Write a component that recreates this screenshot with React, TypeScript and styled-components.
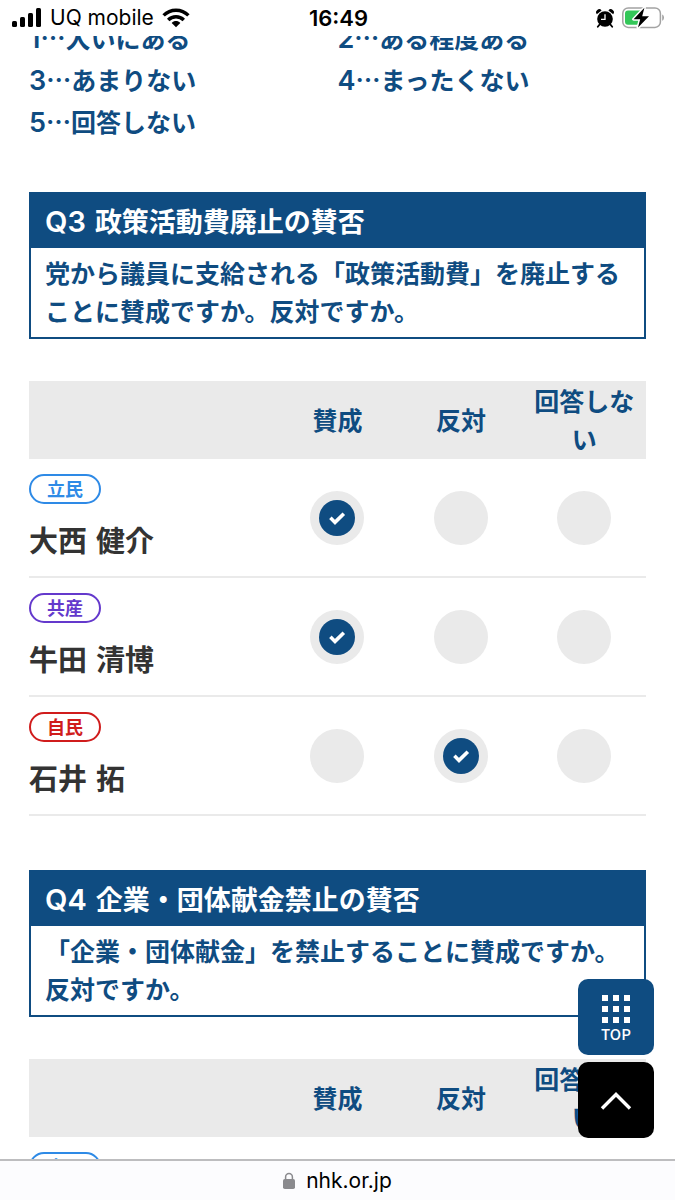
import React from "react";
import styled, { createGlobalStyle } from "styled-components";

const NAVY = "#0f4c81";
const GREY = "#eaeaea";
const JP = `"Noto Sans CJK JP", sans-serif`;
const LATIN = `Inter, "Noto Sans CJK JP", sans-serif`;

const GlobalStyle = createGlobalStyle`
  * { box-sizing: border-box; }
  body {
    margin: 0;
    background: #fff;
    color: #333;
    font-family: ${JP};
  }
`;

const Screen = styled.div`
  display: grid;
  grid-template-rows: auto minmax(0, 1fr) auto;
  height: 100vh;
`;

const StatusBar = styled.header`
  display: grid;
  grid-template-columns: 1fr auto 1fr;
  align-items: center;
  height: 36px;
  padding: 0 10px 0 12px;
  color: #000;
  font: 400 21px/36px ${LATIN};
`;

const StatusGroup = styled.div<{ $end?: boolean }>`
  display: flex;
  align-items: center;
  justify-content: ${(p) => (p.$end ? "flex-end" : "flex-start")};
  gap: 8px;
`;

const Clock = styled.time`
  font-weight: 600;
  font-size: 22px;
`;

const Viewport = styled.div`
  position: relative;
  min-height: 0;
`;

const Scroller = styled.main`
  height: 100%;
  overflow-y: auto;
  scrollbar-width: none;
  padding: 0 29px;
`;

const Options = styled.ol`
  display: grid;
  grid-template-columns: 1fr 1fr;
  row-gap: 4px;
  margin: -18px 0 52px;
  padding: 0;
  list-style: none;
  color: ${NAVY};
  font-size: 25px;
  font-weight: 700;
  line-height: 38px;
`;

const Digit = styled.span`
  font-family: ${LATIN};
  font-size: 27px;
  font-weight: 600;
  line-height: 1;
`;

const Section = styled.section`
  margin-bottom: 54px;
`;

const QuestionBox = styled.div`
  margin-bottom: 42px;
  border: 2px solid ${NAVY};
  color: ${NAVY};
`;

const QuestionTitle = styled.h2`
  display: flex;
  align-items: baseline;
  gap: 9px;
  height: 54px;
  margin: 0;
  padding: 0 14px;
  background: ${NAVY};
  color: #fff;
  font-size: 27px;
  font-weight: 700;
  line-height: 54px;
`;

const QuestionNumber = styled.span`
  font-family: ${LATIN};
  font-size: 29px;
  font-weight: 600;
`;

const QuestionText = styled.p`
  margin: 0;
  padding: 5px 14px 8px;
  font-size: 25px;
  font-weight: 700;
  line-height: 38px;
`;

const Table = styled.table`
  width: 100%;
  table-layout: fixed;
  border-collapse: separate;
  border-spacing: 0;
`;

const HeadCell = styled.th<{ $wide?: boolean }>`
  width: ${(p) => (p.$wide ? 40 : 20)}%;
  padding: 0 0 2px;
  background: ${GREY};
  color: ${NAVY};
  font-size: 25px;
  font-weight: 700;
  line-height: 38px;
`;

const NameCell = styled.th`
  padding: 15px 0 18px;
  border-bottom: 2px solid ${GREY};
  text-align: left;
`;

const Party = styled.span<{ $color: string }>`
  display: block;
  width: 72px;
  height: 30px;
  margin-bottom: 16px;
  border: 2px solid ${(p) => p.$color};
  border-radius: 15px;
  color: ${(p) => p.$color};
  font-size: 18px;
  font-weight: 700;
  line-height: 25px;
  text-align: center;
`;

const Name = styled.span`
  display: flex;
  gap: 9px;
  font-size: 29px;
  font-weight: 700;
  line-height: 38px;
`;

const AnswerCell = styled.td`
  padding: 0;
  border-bottom: 2px solid ${GREY};
`;

const Dot = styled.span`
  display: flex;
  align-items: center;
  justify-content: center;
  width: 54px;
  height: 54px;
  margin: 0 auto;
  border-radius: 50%;
  background: ${GREY};
`;

const Floating = styled.nav`
  position: absolute;
  right: 21px;
  bottom: 21px;
  display: grid;
  gap: 7px;
`;

const FloatButton = styled.button<{ $color: string }>`
  display: flex;
  flex-direction: column;
  align-items: center;
  justify-content: center;
  gap: 3px;
  width: 76px;
  height: 76px;
  padding: 2px 0 0;
  border: 0;
  border-radius: 10px;
  background: ${(p) => p.$color};
  color: #fff;
  font: 500 15px/16px ${JP};
`;

const AddressBar = styled.footer`
  display: flex;
  align-items: center;
  justify-content: center;
  gap: 11px;
  height: 41px;
  border-top: 2px solid #bdbdbf;
  background: #fcfcfe;
  color: #000;
  font: 400 21px/38px ${LATIN};
`;

const SignalIcon = () => (
  <svg width="30" height="20" viewBox="0 0 30 20" aria-hidden="true">
    <rect x="0" y="13" width="5" height="6" rx="1.5" />
    <rect x="8" y="9" width="5" height="10" rx="1.5" />
    <rect x="16" y="5" width="5" height="14" rx="1.5" />
    <rect x="24" y="0" width="5" height="19" rx="1.5" />
  </svg>
);

const WifiIcon = () => (
  <svg width="28" height="20" viewBox="0 0 28 20" aria-hidden="true">
    <g fill="none" stroke="#000" strokeWidth="3.4">
      <path d="M1.6 7.4C8.4 .5 19.6 .5 26.4 7.4" />
      <path d="M6.2 12C10.5 7.7 17.5 7.7 21.8 12" />
    </g>
    <path d="M9.7 14.9C12.1 12.5 15.9 12.5 18.3 14.9L14 19.2Z" />
  </svg>
);

const AlarmIcon = () => (
  <svg width="18" height="19" viewBox="0 0 18 19" aria-hidden="true">
    <circle cx="9" cy="10" r="7.8" />
    <path d="M.8 5.2A3 3 0 0 1 5.6 1.4ZM17.2 5.2A3 3 0 0 0 12.4 1.4Z" />
    <path d="M3.6 15.5 1.8 17.8M14.4 15.5l1.8 2.3" stroke="#000" strokeWidth="1.8" strokeLinecap="round" />
    <path d="M9 5.2V10.4H5" fill="none" stroke="#fff" strokeWidth="1.3" />
  </svg>
);

const BatteryIcon = () => (
  <svg width="43" height="22" viewBox="0 0 43 22" aria-hidden="true">
    <rect x=".8" y="1" width="37.6" height="19.4" rx="5.4" fill="#fff" stroke="#a3a3a3" strokeWidth="1.5" />
    <path d="M40.2 7.6c2.4 1 2.4 5.2 0 6.2Z" fill="#a3a3a3" />
    <path d="M6 3.6H18V17.8H6A3 3 0 0 1 3 14.8V6.6A3 3 0 0 1 6 3.6Z" fill="#34c759" />
    <path d="M22.4 .8 11.6 12.2H18.2L16 20.6 27 9.2H20.2Z" stroke="#fff" strokeWidth="3" strokeLinejoin="round" />
    <path d="M22.4 .8 11.6 12.2H18.2L16 20.6 27 9.2H20.2Z" />
  </svg>
);

const CheckedIcon = () => (
  <svg width="36" height="36" viewBox="0 0 36 36" aria-hidden="true">
    <circle cx="18" cy="18" r="18" fill={NAVY} />
    <path d="M11.4 17.8 16 22.4 24.8 13.8" fill="none" stroke="#fff" strokeWidth="3.6" />
  </svg>
);

const GridIcon = () => (
  <svg width="28" height="28" viewBox="0 0 28 28" fill="#fff" aria-hidden="true">
    {[0, 11, 22].map((y) => [0, 11, 22].map((x) => <rect key={`${x}-${y}`} x={x} y={y} width="6" height="6" />))}
  </svg>
);

const UpIcon = () => (
  <svg width="32" height="20" viewBox="0 0 32 20" fill="none" stroke="#fff" strokeWidth="3.4" aria-hidden="true">
    <path d="M2 17.5 16 3.5 30 17.5" />
  </svg>
);

const LockIcon = () => (
  <svg width="12" height="18" viewBox="0 0 12 18" aria-hidden="true">
    <rect x="0" y="7" width="12" height="10" rx="1.8" fill="#8a8a8e" />
    <path d="M2.6 8.5V5a3.4 3.4 0 0 1 6.8 0v3.5" fill="none" stroke="#8a8a8e" strokeWidth="1.5" />
  </svg>
);

const options = ["大いにある", "ある程度ある", "あまりない", "まったくない", "回答しない"];
const choices = ["賛成", "反対", "回答しない"];

type Candidate = { party: string; color: string; family: string; given: string; answer: number };

const candidates: Candidate[] = [
  { party: "立民", color: "#2e8ae6", family: "大西", given: "健介", answer: 0 },
  { party: "共産", color: "#6439cc", family: "牛田", given: "清博", answer: 0 },
  { party: "自民", color: "#d01c1c", family: "石井", given: "拓", answer: 1 },
];

type QuestionProps = { number: string; title: string; text: string; rows: Candidate[] };

const Question = ({ number, title, text, rows }: QuestionProps) => (
  <Section>
    <QuestionBox>
      <QuestionTitle>
        <QuestionNumber>{number}</QuestionNumber>
        <span>{title}</span>
      </QuestionTitle>
      <QuestionText>{text}</QuestionText>
    </QuestionBox>
    <Table>
      <thead>
        <tr>
          <HeadCell $wide aria-label="候補者" />
          {choices.map((c) => (
            <HeadCell key={c} scope="col">{c}</HeadCell>
          ))}
        </tr>
      </thead>
      <tbody>
        {rows.map((r) => (
          <tr key={r.party}>
            <NameCell scope="row">
              <Party $color={r.color}>{r.party}</Party>
              <Name>
                <span>{r.family}</span>
                <span>{r.given}</span>
              </Name>
            </NameCell>
            {choices.map((c, i) => (
              <AnswerCell key={c}>
                <Dot>{r.answer === i && <CheckedIcon />}</Dot>
              </AnswerCell>
            ))}
          </tr>
        ))}
      </tbody>
    </Table>
  </Section>
);

export default function App() {
  return (
    <Screen>
      <GlobalStyle />
      <StatusBar>
        <StatusGroup>
          <SignalIcon />
          <span>UQ mobile</span>
          <WifiIcon />
        </StatusGroup>
        <Clock>16:49</Clock>
        <StatusGroup $end>
          <AlarmIcon />
          <BatteryIcon />
        </StatusGroup>
      </StatusBar>
      <Viewport>
        <Scroller>
          <Options>
            {options.map((o, i) => (
              <li key={o}>
                <Digit>{i + 1}</Digit>…{o}
              </li>
            ))}
          </Options>
          <Question
            number="Q3"
            title="政策活動費廃止の賛否"
            text="党から議員に支給される「政策活動費」を廃止することに賛成ですか。反対ですか。"
            rows={candidates}
          />
          <Question
            number="Q4"
            title="企業・団体献金禁止の賛否"
            text="「企業・団体献金」を禁止することに賛成ですか。反対ですか。"
            rows={candidates.slice(0, 1)}
          />
        </Scroller>
        <Floating>
          <FloatButton type="button" $color={NAVY}>
            <GridIcon />
            TOP
          </FloatButton>
          <FloatButton type="button" $color="#000" aria-label="ページの先頭へ">
            <UpIcon />
          </FloatButton>
        </Floating>
      </Viewport>
      <AddressBar>
        <LockIcon />
        nhk.or.jp
      </AddressBar>
    </Screen>
  );
}
